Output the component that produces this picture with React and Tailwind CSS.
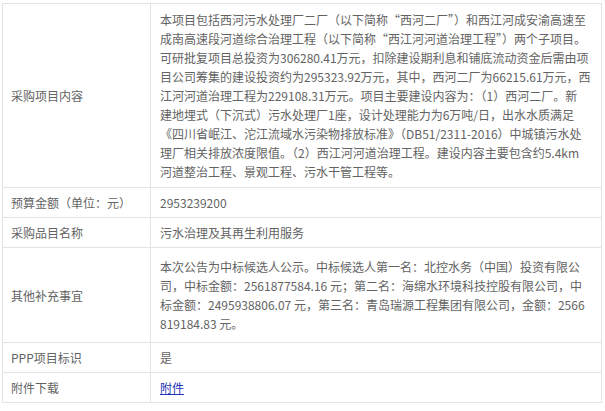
import React from 'react';

const font = { fontFamily: '"Noto Sans CJK SC", "Noto Sans", sans-serif' };

const rows = [
  {
    label: '采购项目内容',
    pad: 'py-[6px]',
    lines: [
      '本项目包括西河污水处理厂二厂（以下简称“西河二厂”）和西江河成安渝高速至',
      '成南高速段河道综合治理工程（以下简称“西江河河道治理工程”）两个子项目。',
      '可研批复项目总投资为306280.41万元，扣除建设期利息和铺底流动资金后需由项',
      '目公司筹集的建设投资约为295323.92万元，其中，西河二厂为66215.61万元，西',
      '江河河道治理工程为229108.31万元。项目主要建设内容为：（1）西河二厂。新',
      '建地埋式（下沉式）污水处理厂1座，设计处理能力为6万吨/日，出水水质满足',
      '《四川省岷江、沱江流域水污染物排放标准》（DB51/2311-2016）中城镇污水处',
      '理厂相关排放浓度限值。（2）西江河河道治理工程。建设内容主要包含约5.4km',
      '河道整治工程、景观工程、污水干管工程等。',
    ],
  },
  { label: '预算金额（单位：元）', pad: 'py-[5px]', lines: ['2953239200'] },
  { label: '采购品目名称', pad: 'py-[5px]', lines: ['污水治理及其再生利用服务'] },
  {
    label: '其他补充事宜',
    pad: 'py-[9px]',
    lines: [
      '本次公告为中标候选人公示。中标候选人第一名：北控水务（中国）投资有限公',
      '司，中标金额：2561877584.16 元；第二名：海绵水环境科技控股有限公司，中',
      '标金额：2495938806.07 元，第三名：青岛瑞源工程集团有限公司，金额：2566',
      '819184.83 元。',
    ],
  },
  { label: 'PPP项目标识', pad: 'py-[5px]', lines: ['是'] },
];

export default function App() {
  return (
    <div className="w-[605px] h-[411px] bg-white pl-[2px] pt-[3px] overflow-hidden" style={font}>
      <table className="w-[600px] border-collapse text-[12px] leading-[19px] text-[#636363]">
        <tbody>
          {rows.map((row) => (
            <tr key={row.label}>
              <td className={`w-[148px] border border-[#e3e3e3] pl-[8px] align-middle whitespace-nowrap ${row.pad}`}>
                {row.label}
              </td>
              <td className={`border border-[#e3e3e3] pl-[9px] pr-[4px] align-middle ${row.pad}`}>
                {row.lines.map((line, i) => (
                  <div key={i} className="whitespace-nowrap">{line}</div>
                ))}
              </td>
            </tr>
          ))}
          <tr>
            <td className="w-[148px] border border-[#e3e3e3] pl-[8px] py-[5px]">附件下载</td>
            <td className="border border-[#e3e3e3] pl-[9px] py-[5px]">
              <a href="#" className="text-[#2433b8] underline">附件</a>
            </td>
          </tr>
        </tbody>
      </table>
    </div>
  );
}
